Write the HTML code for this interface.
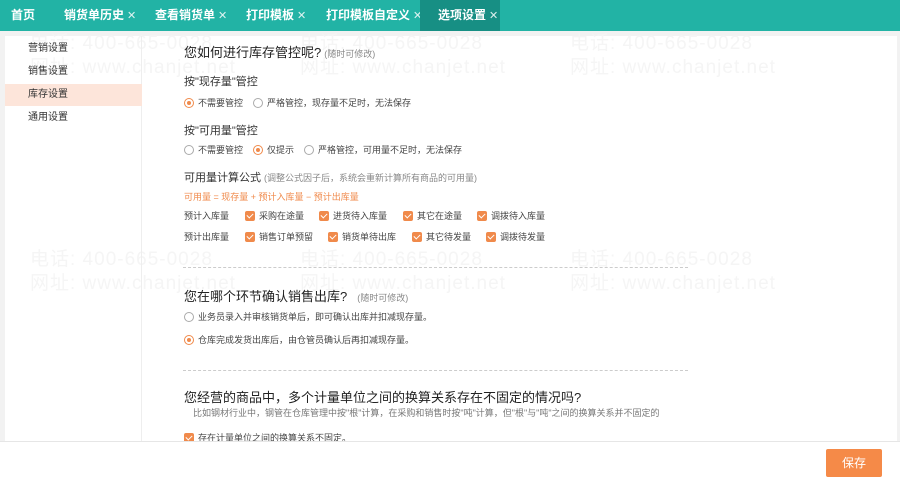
<!DOCTYPE html>
<html><head><meta charset="utf-8"><style>
*{margin:0;padding:0;box-sizing:border-box}
body{width:900px;height:481px;overflow:hidden;background:#f2f2f2;font-family:"Liberation Sans","Noto Sans CJK SC",sans-serif;position:relative;color:#333}
.tabs{position:absolute;left:0;top:0;width:900px;height:31px;background:#22b3a5}
.tab{position:absolute;top:0;height:31px;line-height:31px;color:#fff;font-size:12px;font-weight:bold;white-space:nowrap}
.tab i{font-style:normal;font-weight:normal;font-size:11px;margin-left:3px;opacity:.85}
.panel{position:absolute;left:5px;top:36px;width:892px;height:405px;background:#fff}
.side{position:absolute;left:5px;top:36px;width:137px;height:405px;border-right:1px solid #eee}
.si{position:absolute;left:0;width:137px;height:22px;line-height:22px;padding-left:23px;font-size:10px;color:#333}
.a{position:absolute;white-space:nowrap}
.t{font-size:13px;color:#222}
.t small{font-size:9px;color:#888;margin-left:3px}
.s{font-size:11px;color:#333}
.r{font-size:9px;color:#444}
.rad{display:inline-block;width:10px;height:10px;border:1px solid #aaa;border-radius:50%;vertical-align:-2px;margin-right:4px;position:relative}
.rad.on{border-color:#f08a4b}
.rad.on:after{content:"";position:absolute;left:2px;top:2px;width:4px;height:4px;border-radius:50%;background:#f08a4b}
.cb{display:inline-block;width:10px;height:10px;background:#f08a4b;border-radius:2px;vertical-align:-2px;margin-right:4px;position:relative}
.cb:after{content:"";position:absolute;left:3px;top:1px;width:3px;height:5px;border:solid #fff;border-width:0 1.3px 1.3px 0;transform:rotate(45deg)}
.dash{position:absolute;left:183px;width:505px;border-top:1px dashed #ccc}
.wm{position:absolute;font-size:19px;color:#f5f5f5;white-space:nowrap;letter-spacing:1px}
.foot{position:absolute;left:0;top:441px;width:900px;height:40px;background:#fff;border-top:1px solid #e6e6e6}
.btn{position:absolute;left:826px;top:449px;width:56px;height:28px;background:#f58a48;color:#fff;font-size:12px;text-align:center;line-height:28px;border-radius:2px}
</style></head><body>
<div class="tabs">
<div class="tab" style="left:11px">首页</div>
<div class="tab" style="left:64px">销货单历史<i>✕</i></div>
<div class="tab" style="left:155px">查看销货单<i>✕</i></div>
<div class="tab" style="left:246px">打印模板<i>✕</i></div>
<div class="tab" style="left:326px">打印模板自定义<i>✕</i></div>
<div class="tab" style="left:420px;width:80px;background:#178f84;padding-left:18px">选项设置<i>✕</i></div>
</div>
<div class="panel"></div>
<div class="wm" style="left:30px;top:28px">电话: 400-665-0028</div><div class="wm" style="left:300px;top:28px">电话: 400-665-0028</div><div class="wm" style="left:570px;top:28px">电话: 400-665-0028</div>
<div class="wm" style="left:30px;top:52px">网址: www.chanjet.net</div><div class="wm" style="left:300px;top:52px">网址: www.chanjet.net</div><div class="wm" style="left:570px;top:52px">网址: www.chanjet.net</div>
<div class="wm" style="left:30px;top:244px">电话: 400-665-0028</div><div class="wm" style="left:300px;top:244px">电话: 400-665-0028</div><div class="wm" style="left:570px;top:244px">电话: 400-665-0028</div>
<div class="wm" style="left:30px;top:268px">网址: www.chanjet.net</div><div class="wm" style="left:300px;top:268px">网址: www.chanjet.net</div><div class="wm" style="left:570px;top:268px">网址: www.chanjet.net</div>
<div class="side">
<div class="si" style="top:2px">营销设置</div>
<div class="si" style="top:25px">销售设置</div>
<div class="si" style="top:48px;background:#fde5da">库存设置</div>
<div class="si" style="top:71px">通用设置</div>
</div>

<div class="a t" style="left:184px;top:42px">您如何进行库存管控呢?<small>(随时可修改)</small></div>
<div class="a s" style="left:184px;top:73px">按"现存量"管控</div>
<div class="a r" style="left:184px;top:96px"><span class="rad on"></span>不需要管控 &nbsp;&nbsp;&nbsp;<span class="rad"></span>严格管控，现存量不足时，无法保存</div>
<div class="a s" style="left:184px;top:122px">按"可用量"管控</div>
<div class="a r" style="left:184px;top:143px"><span class="rad"></span>不需要管控 &nbsp;&nbsp;&nbsp;<span class="rad on"></span>仅提示 &nbsp;&nbsp;&nbsp;<span class="rad"></span>严格管控，可用量不足时，无法保存</div>
<div class="a s" style="left:184px;top:169px">可用量计算公式<span style="font-size:9px;color:#888;margin-left:3px">(调整公式因子后，系统会重新计算所有商品的可用量)</span></div>
<div class="a r" style="left:184px;top:190px;color:#f08a4b">可用量 = 现存量 + 预计入库量 − 预计出库量</div>
<div class="a r" style="left:184px;top:209px">预计入库量</div>
<div class="a r" style="left:245px;top:209px"><span class="cb"></span>采购在途量</div>
<div class="a r" style="left:319px;top:209px"><span class="cb"></span>进货待入库量</div>
<div class="a r" style="left:403px;top:209px"><span class="cb"></span>其它在途量</div>
<div class="a r" style="left:477px;top:209px"><span class="cb"></span>调拨待入库量</div>
<div class="a r" style="left:184px;top:230px">预计出库量</div>
<div class="a r" style="left:245px;top:230px"><span class="cb"></span>销售订单预留</div>
<div class="a r" style="left:328px;top:230px"><span class="cb"></span>销货单待出库</div>
<div class="a r" style="left:412px;top:230px"><span class="cb"></span>其它待发量</div>
<div class="a r" style="left:486px;top:230px"><span class="cb"></span>调拨待发量</div>
<div class="dash" style="top:267px"></div>
<div class="a t" style="left:184px;top:286px">您在哪个环节确认销售出库?<small style="margin-left:10px">(随时可修改)</small></div>
<div class="a r" style="left:184px;top:310px"><span class="rad"></span>业务员录入并审核销货单后，即可确认出库并扣减现存量。</div>
<div class="a r" style="left:184px;top:333px"><span class="rad on"></span>仓库完成发货出库后，由仓管员确认后再扣减现存量。</div>
<div class="dash" style="top:370px"></div>
<div class="a t" style="left:184px;top:387px">您经营的商品中，多个计量单位之间的换算关系存在不固定的情况吗?</div>
<div class="a" style="left:193px;top:406px;font-size:9px;color:#777">比如钢材行业中，钢管在仓库管理中按"根"计算，在采购和销售时按"吨"计算，但"根"与"吨"之间的换算关系并不固定的</div>
<div class="a r" style="left:184px;top:431px"><span class="cb"></span>存在计量单位之间的换算关系不固定。</div>
<div class="foot"></div>
<div class="btn">保存</div>
</body></html>
